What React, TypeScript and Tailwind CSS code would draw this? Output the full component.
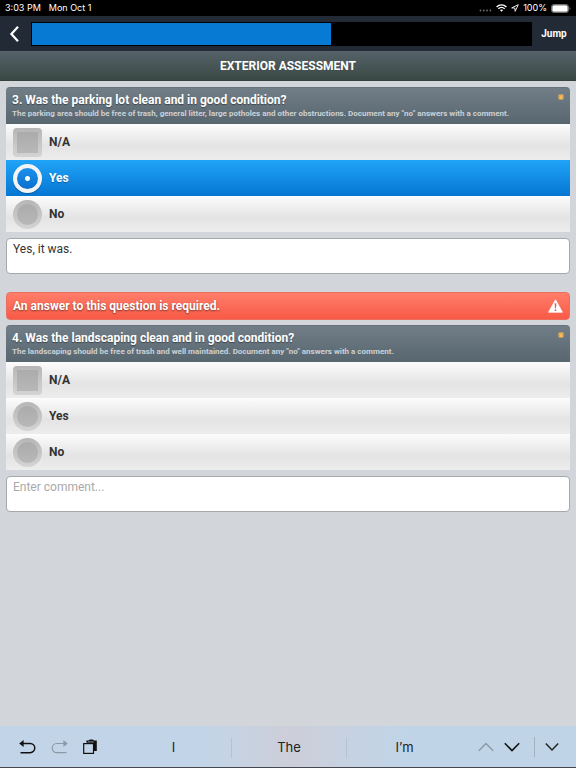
import { useState } from "react";

type Answer = "Yes" | "No" | "";

interface QuestionProps {
    id: string;
    title: string;
    help: string;
    initialAnswer?: Answer;
    initialComment?: string;
    error?: string;
}

function StatusBar() {
    return (
        <div className="flex h-4 items-center justify-between bg-black px-[5px] font-['Inter',sans-serif] text-[9px] leading-4 text-white">
            <div className="flex gap-2">
                <span>3:03 PM</span>
                <span>Mon Oct 1</span>
            </div>
            <div className="flex items-center gap-1">
                <svg width="13" height="8" viewBox="0 0 13 8" fill="#6b6b6b">
                    <circle cx="1.5" cy="6.5" r="0.9" />
                    <circle cx="4.8" cy="6.5" r="0.9" />
                    <circle cx="8.1" cy="6.5" r="0.9" />
                    <circle cx="11.4" cy="6.5" r="0.9" />
                </svg>
                <svg width="11" height="8" viewBox="0 0 11 8" fill="none" stroke="white" strokeWidth="1.4">
                    <path d="M0.6 2.9C3.4 0.2 7.6 0.2 10.4 2.9" />
                    <path d="M2.3 4.8C4.2 3.1 6.8 3.1 8.7 4.8" />
                    <path d="M3.9 6.1C4.8 5.3 6.2 5.3 7.1 6.1L5.5 7.8Z" fill="white" stroke="none" />
                </svg>
                <svg width="8" height="8" viewBox="0 0 8 8" fill="none" stroke="white" strokeWidth="0.9" strokeLinejoin="round">
                    <path d="M7.3 0.7L0.7 3.9L3.9 4.1L4.1 7.3Z" />
                </svg>
                <span>100%</span>
                <svg width="20" height="9" viewBox="0 0 20 9">
                    <rect x="0.5" y="0.5" width="17" height="8" rx="2.2" fill="none" stroke="#8a8a8a" strokeWidth="0.8" />
                    <rect x="1.3" y="1.3" width="15.4" height="6.4" rx="1.5" fill="white" />
                    <path d="M18.6 3V6C19.6 5.6 19.6 3.4 18.6 3Z" fill="#8a8a8a" />
                </svg>
            </div>
        </div>
    );
}

function NavBar({ progress }: { progress: number }) {
    return (
        <nav className="flex h-[35px] items-center bg-[#222a35]">
            <button type="button" aria-label="Back" className="flex w-[31px] justify-center pr-1">
                <svg width="10" height="16" viewBox="0 0 10 16" fill="none" stroke="white" strokeWidth="2.2">
                    <path d="M9 0.8L2.4 8L9 15.2" />
                </svg>
            </button>
            <div
                role="progressbar"
                aria-label="Progress"
                aria-valuenow={progress}
                className="h-6 flex-1 border border-black bg-black"
            >
                <div className="h-full bg-[#077ad4]" style={{ width: `${progress}%` }} />
            </div>
            <button type="button" className="w-11 text-center text-[10px] font-bold text-white">
                Jump
            </button>
        </nav>
    );
}

const rowBase = "flex h-9 items-center gap-[7px] pl-[7px] text-[12px] font-bold";
const rowIdle = "bg-linear-to-b from-[#fcfcfc] via-[#e4e4e4] via-60% to-[#ededed] text-[#333]";
const rowActive = "bg-linear-to-b from-[#20a4f8] to-[#0676d2] text-white [text-shadow:0_1px_1px_rgba(0,0,0,0.3)]";
const markBase = "size-[29px] appearance-none border-4";
const markIdle =
    "border-transparent [background:linear-gradient(#ababab,#b8b8b8)_padding-box,linear-gradient(#b6b6b6,#d4d4d4)_border-box]";
const markActive =
    "border-[#f4f4f4] [background:radial-gradient(circle,white_2px,transparent_3px),linear-gradient(#1c92ec,#0a6fcf)] shadow-[0_1px_1px_rgba(0,0,0,0.25)]";

function Question({ id, title, help, initialAnswer = "", initialComment = "", error }: QuestionProps) {
    const [answer, setAnswer] = useState<Answer>(initialAnswer);
    const [notApplicable, setNotApplicable] = useState(false);
    const [comment, setComment] = useState(initialComment);

    return (
        <section>
            {error && (
                <div
                    role="alert"
                    className="mb-[5px] flex h-7 items-center justify-between rounded-sm border border-[#e9705f] bg-linear-to-b from-[#ff7d69] to-[#f85a46] px-1.5 text-[12px] font-bold text-white [text-shadow:0_1px_2px_rgba(0,0,0,0.5)]"
                >
                    <span>{error}</span>
                    <svg width="15" height="14" viewBox="0 0 15 14">
                        <path d="M7.5 0.8L14.4 13.2H0.6Z" fill="white" stroke="white" strokeWidth="0.8" strokeLinejoin="round" />
                        <path d="M6.6 4.3H8.4L8 9.5H7Z" fill="#ee604e" />
                        <circle cx="7.5" cy="11.2" r="0.9" fill="#ee604e" />
                    </svg>
                </div>
            )}

            <fieldset aria-labelledby={`${id}-title`}>
                <div className="flex h-[37px] items-start justify-between rounded-t-sm border-t border-[#66727b] bg-linear-to-b from-[#717e87] to-[#586670] pt-1 pr-1.5 pl-1.5">
                    <div>
                        <h2 id={`${id}-title`} className="text-[12px] leading-[17px] font-bold text-white [text-shadow:0_1px_1px_rgba(0,0,0,0.4)]">
                            {title}
                        </h2>
                        <p className="text-[8px] leading-[9px] font-bold text-[#ccd1d4]">{help}</p>
                    </div>
                    <svg width="6" height="8" viewBox="0 0 6 8" stroke="#fdb84e" strokeWidth="1.1" role="img" aria-label="Required">
                        <path d="M3 2V8M0 5H6M0.6 2.6L5.4 7.4M5.4 2.6L0.6 7.4" />
                    </svg>
                </div>

                <label className={`${rowBase} ${rowIdle}`}>
                    <input
                        type="checkbox"
                        checked={notApplicable}
                        onChange={(e) => setNotApplicable(e.target.checked)}
                        className={`${markBase} rounded-sm ${markIdle}`}
                    />
                    N/A
                </label>
                {(["Yes", "No"] as const).map((option) => (
                    <label key={option} className={`${rowBase} ${answer === option ? rowActive : rowIdle}`}>
                        <input
                            type="radio"
                            name={id}
                            checked={answer === option}
                            onChange={() => setAnswer(option)}
                            className={`${markBase} rounded-full ${answer === option ? markActive : markIdle}`}
                        />
                        {option}
                    </label>
                ))}
            </fieldset>

            <textarea
                aria-label={`Comment for question ${id}`}
                placeholder="Enter comment..."
                value={comment}
                onChange={(e) => setComment(e.target.value)}
                className="mt-1.5 block h-9 w-full resize-none rounded-sm border border-[#a5a9ac] bg-white px-1.5 py-0.5 text-[12px] leading-4 text-[#333] placeholder:text-[#aaa]"
            />
        </section>
    );
}

function KeyboardBar() {
    return (
        <footer className="flex h-[42px] items-center border-b border-[#45484f] bg-linear-to-r from-[#c2d5e8] from-35% via-[#cdced9] to-[#c0d4e8] to-70% font-['Inter',sans-serif] text-[13px] text-[#222]">
            <div className="flex flex-1 items-center gap-[15px] pl-[19px]">
                <button type="button" aria-label="Undo">
                    <svg width="17" height="16" viewBox="0 0 17 16" fill="none" stroke="#111" strokeWidth="1.4">
                        <path d="M2 4.5H11.2A4.6 4.6 0 0 1 11.2 13.7H1.5" />
                        <path d="M0.2 4.5L4.6 1V8Z" fill="#111" stroke="none" />
                    </svg>
                </button>
                <button type="button" aria-label="Redo">
                    <svg width="17" height="16" viewBox="0 0 17 16" fill="none" stroke="#8c99a6" strokeWidth="1.2">
                        <path d="M15 4.5H5.8A4.6 4.6 0 0 0 5.8 13.7H15.5" />
                        <path d="M16.8 4.5L12.4 1V8Z" fill="#8c99a6" stroke="none" />
                    </svg>
                </button>
                <button type="button" aria-label="Paste">
                    <svg width="14" height="16" viewBox="0 0 14 16" fill="none">
                        <path d="M3.4 1.6H5.6C6 0.2 10.6 0.2 11 1.6H13.8V12H11V3.8H3.4Z" fill="#111" />
                        <path d="M5 2.6H10.6" stroke="#7d8b98" strokeWidth="0.7" />
                        <rect x="0.7" y="4.6" width="9.8" height="9.8" fill="#c2d5e8" stroke="#111" strokeWidth="1.2" />
                    </svg>
                </button>
            </div>
            <div className="flex flex-none basis-3/5 items-center pt-0.5">
                <button type="button" className="h-5 flex-1 border-r border-[#b4c3d2]">I</button>
                <button type="button" className="h-5 flex-1 border-r border-[#b4c3d2]">The</button>
                <button type="button" className="h-5 flex-1">I’m</button>
            </div>
            <div className="flex flex-1 items-center justify-end gap-2.5 pr-[17px]">
                <button type="button" aria-label="Previous field">
                    <svg width="16" height="10" viewBox="0 0 16 10" fill="none" stroke="#8799a9" strokeWidth="1.4">
                        <path d="M0.8 8.8L8 1.4L15.2 8.8" />
                    </svg>
                </button>
                <button type="button" aria-label="Next field">
                    <svg width="16" height="10" viewBox="0 0 16 10" fill="none" stroke="#111" strokeWidth="1.6">
                        <path d="M0.8 1.2L8 8.6L15.2 1.2" />
                    </svg>
                </button>
                <span className="ml-1 h-5 w-px bg-[#a3b2c0]" />
                <button type="button" aria-label="Hide keyboard">
                    <svg width="14" height="10" viewBox="0 0 14 10" fill="none" stroke="#222" strokeWidth="1.5">
                        <path d="M0.8 1.6L7 8L13.2 1.6" />
                    </svg>
                </button>
            </div>
        </footer>
    );
}

export default function App() {
    return (
        <div className="flex min-h-screen flex-col bg-[#d2d6db] font-['Roboto',sans-serif]">
            <StatusBar />
            <NavBar progress={60} />
            <h1 className="h-[30px] border-b border-[#35423f] bg-linear-to-b from-[#55636a] to-[#3a4844] text-center text-[12px] leading-[30px] font-bold text-white">
                EXTERIOR ASSESSMENT
            </h1>
            <main className="flex flex-1 flex-col gap-[18px] px-1.5 pt-1.5">
                <Question
                    id="3"
                    title="3. Was the parking lot clean and in good condition?"
                    help={'The parking area should be free of trash, general litter, large potholes and other obstructions. Document any "no" answers with a comment.'}
                    initialAnswer="Yes"
                    initialComment="Yes, it was."
                />
                <Question
                    id="4"
                    title="4. Was the landscaping clean and in good condition?"
                    help={'The landscaping should be free of trash and well maintained. Document any "no" answers with a comment.'}
                    error="An answer to this question is required."
                />
            </main>
            <KeyboardBar />
        </div>
    );
}
